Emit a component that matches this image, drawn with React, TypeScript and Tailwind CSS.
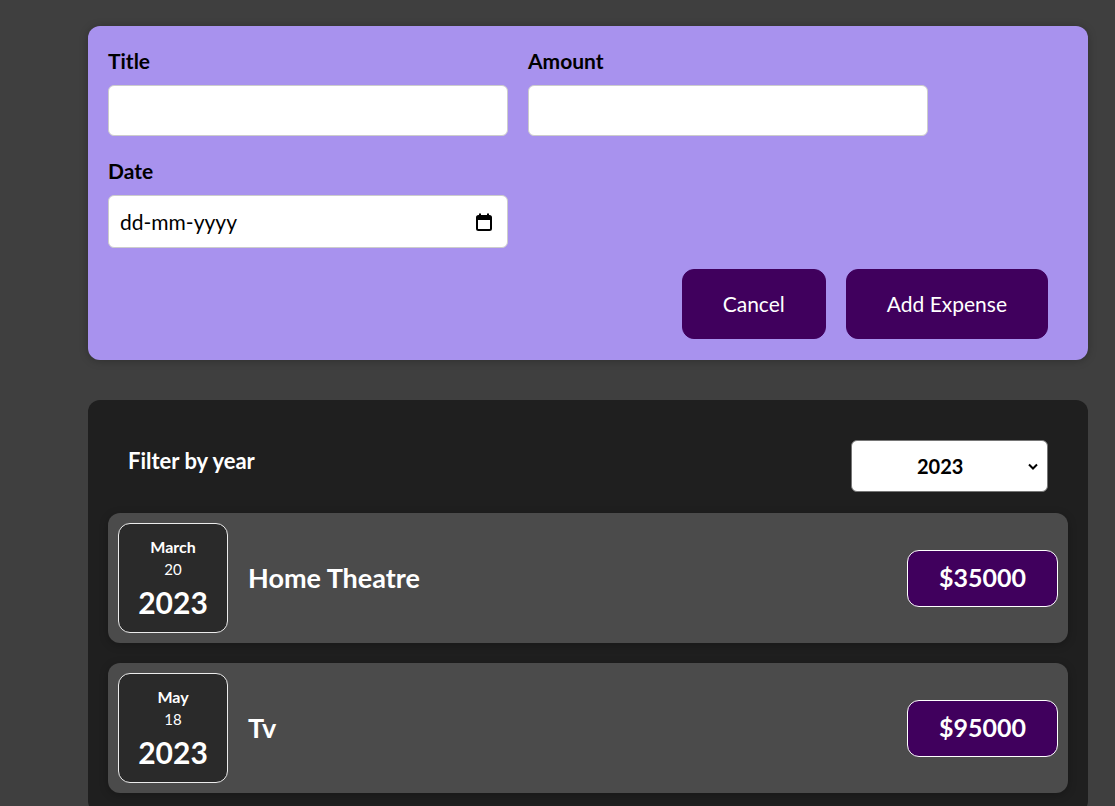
import React from "react";

const font = { fontFamily: "Lato, 'Noto Sans', sans-serif" };

function CalendarIcon() {
  return (
    <svg width="16" height="18" viewBox="0 0 16 18" fill="none">
      <rect x="3" y="0.5" width="2" height="3" fill="#000" />
      <rect x="11" y="0.5" width="2" height="3" fill="#000" />
      <rect x="1" y="3" width="14" height="14" rx="1.5" stroke="#000" strokeWidth="2" />
      <rect x="1" y="3" width="14" height="4" fill="#000" />
    </svg>
  );
}

function Chevron() {
  return (
    <svg width="10" height="7" viewBox="0 0 10 7" fill="none">
      <polyline points="1,1.5 5,5.5 9,1.5" stroke="#000" strokeWidth="2" />
    </svg>
  );
}

type Expense = { month: string; day: string; year: string; title: string; amount: string };

const expenses: Expense[] = [
  { month: "March", day: "20", year: "2023", title: "Home Theatre", amount: "$35000" },
  { month: "May", day: "18", year: "2023", title: "Tv", amount: "$95000" },
];

function ExpenseItem({ e }: { e: Expense }) {
  return (
    <li className="flex items-center rounded-xl bg-[#4b4b4b] p-[10px] shadow-[0_2px_8px_rgba(0,0,0,0.25)]">
      <div className="flex h-[110px] w-[110px] shrink-0 flex-col items-center justify-center rounded-xl border border-[#ececec] bg-[#2a2a2a] text-white">
        <div className="text-[16px] font-bold leading-[20px]">{e.month}</div>
        <div className="mt-[2px] text-[15px] leading-[20px]">{e.day}</div>
        <div className="mt-[5px] text-[30px] font-bold leading-[36px]">{e.year}</div>
      </div>
      <h2 className="mx-5 flex-1 text-[27px] font-bold leading-[36px] text-white">{e.title}</h2>
      <div className="flex h-[57px] items-center rounded-xl border border-white bg-[#40005d] px-[31px] text-[25px] font-bold text-white">
        {e.amount}
      </div>
    </li>
  );
}

export default function App() {
  return (
    <div className="min-h-screen overflow-hidden bg-[#3f3f3f] pt-[26px]" style={font}>
      <div className="ml-[88px] w-[1000px] rounded-xl bg-[#a892ee] px-5 pb-[21px] pt-5 shadow-[0_1px_8px_rgba(0,0,0,0.25)]">
        <div className="mb-[21px] flex flex-wrap gap-5">
          <div>
            <label className="mb-[9px] block text-[21px] font-bold leading-[30px] text-black">Title</label>
            <input type="text" className="block h-[51px] w-[400px] rounded-md border border-[#ccc] bg-white px-[10px] text-[21px]" style={font} />
          </div>
          <div>
            <label className="mb-[9px] block text-[21px] font-bold leading-[30px] text-black">Amount</label>
            <input type="number" className="block h-[51px] w-[400px] rounded-md border border-[#ccc] bg-white px-[10px] text-[21px]" style={font} />
          </div>
          <div>
            <label className="mb-[9px] block text-[21px] font-bold leading-[30px] text-black">Date</label>
            <div className="flex h-[53px] w-[400px] items-center justify-between rounded-md border border-[#ccc] bg-white pl-[11px] pr-[15px]">
              <span className="text-[21px] leading-[30px] text-black">dd-mm-yyyy</span>
              <CalendarIcon />
            </div>
          </div>
        </div>
        <div className="flex justify-end">
          <button className="mr-5 h-[70px] rounded-xl border border-[#40005d] bg-[#40005d] px-10 text-[21px] text-white" style={font}>
            Cancel
          </button>
          <button className="mr-5 h-[70px] rounded-xl border border-[#40005d] bg-[#40005d] px-10 text-[21px] text-white" style={font}>
            Add Expense
          </button>
        </div>
      </div>

      <div className="ml-[88px] mt-10 w-[1000px] rounded-xl bg-[#1f1f1f] p-5">
        <div className="mb-[21px] mt-5 flex items-center justify-between px-5 text-white">
          <label className="mb-[10px] text-[22px] font-bold leading-[30px]">Filter by year</label>
          <div className="relative h-[52px] w-[197px]">
            <select
              defaultValue="2023"
              className="h-full w-full appearance-none rounded-md border border-[#767676] bg-white pl-[65px] text-[20px] font-bold text-black"
              style={font}
            >
              <option value="2024">2024</option>
              <option value="2023">2023</option>
              <option value="2022">2022</option>
              <option value="2021">2021</option>
            </select>
            <div className="pointer-events-none absolute right-[10px] top-[23px]">
              <Chevron />
            </div>
          </div>
        </div>
        <ul className="flex flex-col gap-5">
          {expenses.map((e) => (
            <ExpenseItem key={e.title} e={e} />
          ))}
        </ul>
      </div>
    </div>
  );
}
